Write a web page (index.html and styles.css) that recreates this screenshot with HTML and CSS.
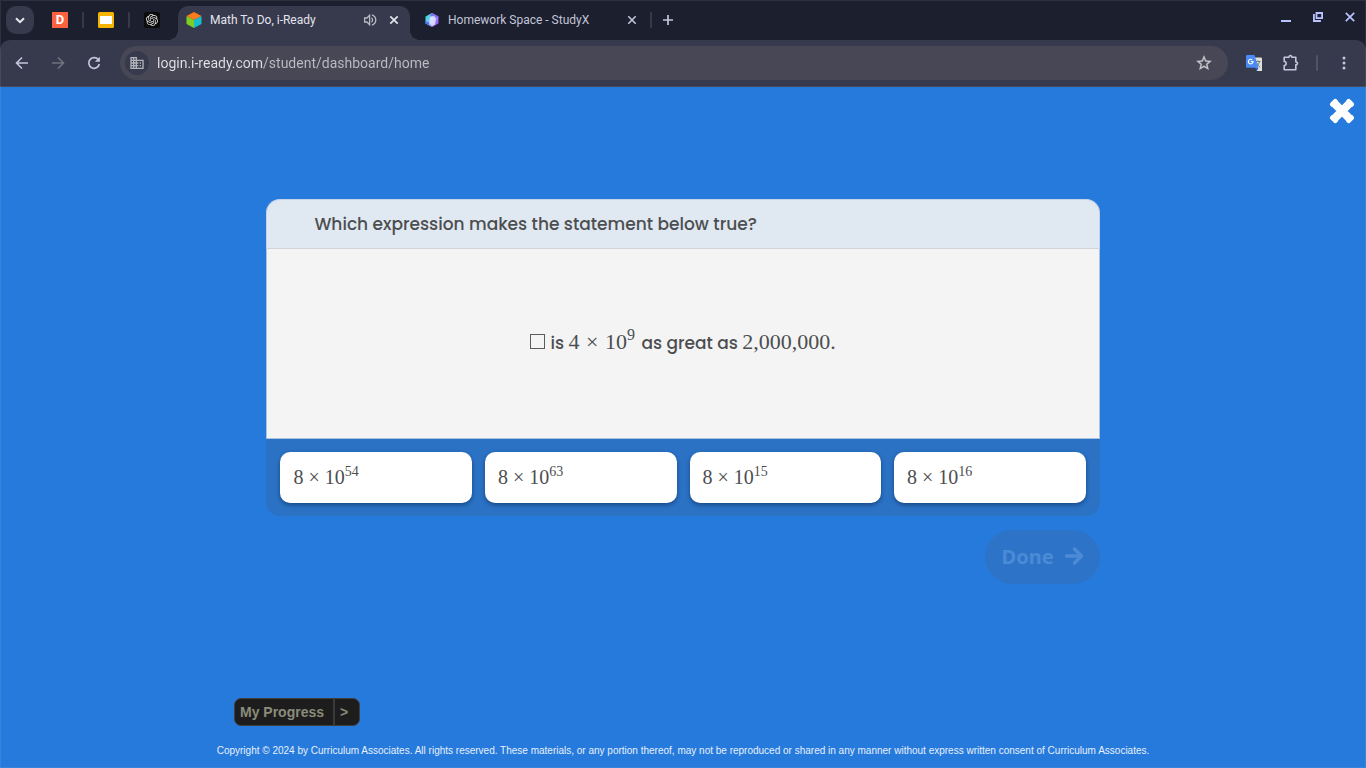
FILE: index.html
```html
<!DOCTYPE html>
<html lang="en">
<head>
<meta charset="utf-8">
<title>Math To Do, i-Ready</title>
<link rel="stylesheet" href="styles.css">
</head>
<body>
<header class="browser">
  <div class="tabstrip">
    <button class="tab-search" aria-label="Search tabs"><svg width="12" height="12" viewBox="0 0 12 12"><path d="M2 4.200 6 8.200l4-4" fill="none" stroke="currentColor" stroke-width="2"/></svg></button>
    <button class="pinned" aria-label="Pinned tab D"><span class="fav fav-d">D</span></button>
    <span class="sep"></span>
    <button class="pinned" aria-label="Slides"><svg width="16" height="16" viewBox="0 0 16 16"><rect width="16" height="16" rx="1.500" fill="#f5b400"/><rect x="2" y="4" width="12" height="8" fill="#fff"/></svg></button>
    <span class="sep"></span>
    <button class="pinned" aria-label="ChatGPT"><svg width="16" height="16" viewBox="0 0 32 32"><rect width="32" height="32" rx="5" fill="#0b0b0c"/><path transform="translate(4 4)" fill="#e6e6e6" d="M22.280 9.820a5.980 5.980 0 0 0-.52-4.910 6.050 6.050 0 0 0-6.510-2.900A6.070 6.070 0 0 0 4.980 4.180a5.980 5.980 0 0 0-4 2.900 6.050 6.050 0 0 0 .74 7.100 5.980 5.980 0 0 0 .51 4.910 6.050 6.050 0 0 0 6.520 2.900A5.980 5.980 0 0 0 13.260 24a6.060 6.060 0 0 0 5.770-4.210 5.990 5.990 0 0 0 4-2.900 6.060 6.060 0 0 0-.75-7.070zm-9.020 12.610a4.480 4.480 0 0 1-2.880-1.040l.14-.08 4.780-2.760a.79.79 0 0 0 .39-.68v-6.740l2.020 1.170a.07.07 0 0 1 .04.05v5.580a4.500 4.500 0 0 1-4.490 4.500zm-9.660-4.130a4.470 4.470 0 0 1-.54-3.010l.14.09 4.780 2.760a.77.77 0 0 0 .78 0l5.840-3.370v2.330a.08.08 0 0 1-.03.06L9.740 19.950a4.500 4.500 0 0 1-6.140-1.650zM2.340 7.900a4.490 4.490 0 0 1 2.370-1.970V11.600a.77.77 0 0 0 .39.68l5.810 3.350-2.020 1.170a.08.08 0 0 1-.07 0l-4.830-2.790A4.500 4.500 0 0 1 2.340 7.870zm16.600 3.860l-5.830-3.390L15.120 7.200a.08.08 0 0 1 .07 0l4.830 2.790a4.490 4.490 0 0 1-.68 8.100v-5.680a.79.79 0 0 0-.4-.65zm2.010-3.020l-.14-.09-4.770-2.780a.78.78 0 0 0-.79 0L9.410 9.230V6.900a.07.07 0 0 1 .03-.06l4.830-2.790a4.500 4.500 0 0 1 6.680 4.660zM8.310 12.860l-2.020-1.160a.08.08 0 0 1-.04-.06V6.070a4.500 4.500 0 0 1 7.380-3.450l-.14.08-4.780 2.760a.79.79 0 0 0-.39.68zm1.100-2.370l2.600-1.500 2.610 1.500v3l-2.600 1.500-2.610-1.500z"/></svg></button>
    <div class="tab tab-active">
      <svg width="16" height="16" viewBox="0 0 16 16"><path d="M8 0l7.500 4L8 8 .5 4z" fill="#ff7a1a"/><path d="M.5 4L8 8v8L.5 12z" fill="#7fce26"/><path d="M15.500 4L8 8v8l7.500-4z" fill="#19bccb"/></svg>
      <span class="tab-title">Math To Do, i-Ready</span>
      <button class="tab-btn" aria-label="Mute tab"><svg width="14" height="14" viewBox="0 0 14 14" fill="none" stroke="#b9bac6" stroke-width="1.300"><path d="M1.600 5v4h2.300l2.700 2.600V2.400L3.900 5z"/><path d="M8.500 4.800c1.400 1 1.400 3.400 0 4.400M9 1.800c5 1.900 5 8.500 0 10.400"/></svg></button>
      <button class="tab-btn" aria-label="Close tab"><svg width="10" height="10" viewBox="0 0 10 10"><path d="M1.300 1.300l7.400 7.400M8.700 1.300L1.300 8.700" stroke="#e4e4ee" stroke-width="1.700"/></svg></button>
    </div>
    <div class="tab">
      <svg width="16" height="16" viewBox="0 0 16 16"><defs><linearGradient id="gem" x1="0" y1=".2" x2="1" y2=".8"><stop offset="0" stop-color="#20e0d8"/><stop offset=".45" stop-color="#9db8ff"/><stop offset="1" stop-color="#9a4df0"/></linearGradient></defs><path d="M8 1l6.500 3.500v7L8 15l-6.500-3.500v-7z" fill="url(#gem)"/><path d="M8 1l6.500 3.500L11 6 6 4z" fill="#7a6cf0"/><path d="M6 5l4-1.500 2 3-1 6-3 1.500-2.500-3z" fill="#eef" opacity=".75"/><path d="M1.500 9l3.500 1.500v2.800l-3.500-1.800z" fill="#4a73f5"/></svg>
      <span class="tab-title">Homework Space - StudyX</span>
      <button class="tab-btn" aria-label="Close tab"><svg width="10" height="10" viewBox="0 0 10 10"><path d="M1.300 1.300l7.400 7.400M8.700 1.300L1.300 8.700" stroke="#c3c5d8" stroke-width="1.600"/></svg></button>
    </div>
    <span class="sep"></span>
    <button class="new-tab" aria-label="New tab"><svg width="12" height="12" viewBox="0 0 12 12"><path d="M6 1v10M1 6h10" stroke="#c3c5d8" stroke-width="1.700"/></svg></button>
    <div class="window-controls">
      <button aria-label="Minimize"><svg width="12" height="12" viewBox="0 0 12 12"><path d="M1 10h10" stroke="currentColor" stroke-width="2"/></svg></button>
      <button aria-label="Restore"><svg width="12" height="12" viewBox="0 0 12 12" fill="none" stroke="currentColor" stroke-width="1.800"><path d="M4.500 2h5.600v5.200H4.500zM1.900 3v7h7"/></svg></button>
      <button aria-label="Close window"><svg width="12" height="12" viewBox="0 0 12 12"><path d="M1.800 1.800l8.400 8.400M10.200 1.800l-8.400 8.400" stroke="currentColor" stroke-width="1.700"/></svg></button>
    </div>
  </div>
  <div class="toolbar">
    <button class="tool" aria-label="Back"><svg width="16" height="16" viewBox="0 0 16 16" fill="none" stroke="#c4c5db" stroke-width="1.600"><path d="M14 8H3M8 2.500L2.500 8 8 13.500"/></svg></button>
    <button class="tool" aria-label="Forward" disabled><svg width="16" height="16" viewBox="0 0 16 16" fill="none" stroke="#70727f" stroke-width="1.600"><path d="M2 8h11M8 2.500L13.500 8 8 13.500"/></svg></button>
    <button class="tool" aria-label="Reload"><svg width="16" height="16" viewBox="0 0 16 16"><path d="M12.600 5.200A5.300 5.300 0 1 0 13.300 9" fill="none" stroke="#c4c5db" stroke-width="1.700"/><path d="M13.900 1.800v5H8.900z" fill="#c4c5db"/></svg></button>
    <div class="omnibox">
      <button class="site-info" aria-label="Site information"><svg width="16" height="16" viewBox="0 0 24 24" fill="#b3b3ba"><path d="M12 7V3H2v18h20V7H12zM6 19H4v-2h2v2zm0-4H4v-2h2v2zm0-4H4V9h2v2zm0-4H4V5h2v2zm4 12H8v-2h2v2zm0-4H8v-2h2v2zm0-4H8V9h2v2zm0-4H8V5h2v2zm10 12h-8v-2h2v-2h-2v-2h2v-2h-2V9h8v10zm-2-8h-2v2h2v-2zm0 4h-2v2h2v-2z"/></svg></button>
      <input class="url" type="text" aria-label="Address" value="login.i-ready.com/student/dashboard/home">
      <button class="star" aria-label="Bookmark this tab"><svg width="18" height="18" viewBox="0 0 24 24" fill="#c8c8ce" stroke="#c8c8ce" stroke-width=".4"><path d="M22 9.240l-7.190-.62L12 2 9.190 8.630 2 9.240l5.460 4.730L5.820 21 12 17.270 18.180 21l-1.630-7.030L22 9.240zM12 15.400l-3.760 2.270 1-4.280-3.320-2.880 4.380-.38L12 6.100l1.710 4.040 4.380.38-3.320 2.880 1 4.280L12 15.400z"/></svg></button>
    </div>
    <button class="tool" aria-label="Google Translate"><svg width="16" height="16" viewBox="0 0 16 16"><path d="M6 2.500h9a1 1 0 0 1 1 1V16h-5z" fill="#dfe0da"/><path d="M9.500 6.500h5M12 5.500v1M13.500 6.500c-.5 2.500-2 4-3 5M10.800 8c.8 1.800 2 3 3.400 4" fill="none" stroke="#66757a" stroke-width=".9"/><path d="M1 0h7.500l4 12.800H1a1 1 0 0 1-1-1V1a1 1 0 0 1 1-1z" fill="#4a8af4"/><path d="M8.500 12.800h4L10.800 16z" fill="#2a56c6"/><path d="M6.300 4.900A2.300 2.300 0 1 0 7 6.500H4.800" fill="none" stroke="#fff" stroke-width="1.200"/></svg></button>
    <button class="tool" aria-label="Extensions"><svg width="18" height="18" viewBox="0 0 18 18"><path d="M3.200 3.300h4.800c-.2-2.200 3-2.200 2.800 0h4v4.600c2.200-.1 2.200 3 0 2.900v4.900H3.200v-4.100c2.600-.2 2.600-3.900 0-4.100z" fill="none" stroke="#c4c5db" stroke-width="1.600" stroke-linejoin="round"/></svg></button>
    <span class="sep"></span>
    <button class="tool" aria-label="Menu"><svg width="16" height="16" viewBox="0 0 16 16" fill="#c4c5db"><circle cx="8" cy="3" r="1.500"/><circle cx="8" cy="8" r="1.500"/><circle cx="8" cy="13" r="1.500"/></svg></button>
  </div>
</header>
<main class="page">
  <button class="page-close" aria-label="Close lesson"><svg width="26" height="26" viewBox="0 0 26 26"><path d="M4.900 4.900l16.200 16.200M21.100 4.900L4.900 21.100" stroke="#fff" stroke-width="8"/><path d="M3.500 6.300l2.800-2.800M19.700 3.500l2.800 2.800M22.500 19.700l-2.800 2.800M6.300 22.500l-2.800-2.800" stroke="#fff" stroke-width="5" stroke-linecap="round"/></svg></button>
  <section class="question">
    <h1 class="question-head">Which expression makes the statement below true?</h1>
    <div class="question-body">
      <p class="statement"><span class="blank"></span> is <span class="math">4 <span class="times">×</span> 10<sup>9</sup></span> as great as <span class="math">2,000,000.</span></p>
    </div>
    <div class="answers">
      <button class="answer math">8 <span class="times">×</span> 10<sup>54</sup></button>
      <button class="answer math">8 <span class="times">×</span> 10<sup>63</sup></button>
      <button class="answer math">8 <span class="times">×</span> 10<sup>15</sup></button>
      <button class="answer math">8 <span class="times">×</span> 10<sup>16</sup></button>
    </div>
    <button class="done" disabled>Done <svg width="20" height="20" viewBox="0 0 20 20" fill="none" stroke="currentColor" stroke-width="3.400" stroke-linecap="round" stroke-linejoin="round"><path d="M2.500 10h14M10.500 3l7 7-7 7"/></svg></button>
  </section>
  <footer class="footer">
    <button class="progress"><span class="progress-label">My Progress</span><span class="progress-arrow">&gt;</span></button>
    <p class="copyright">Copyright © 2024 by Curriculum Associates. All rights reserved. These materials, or any portion thereof, may not be reproduced or shared in any manner without express written consent of Curriculum Associates.</p>
  </footer>
</main>
</body>
</html>
```
FILE: styles.css
```css
* { box-sizing: border-box; }

body {
  margin: 0;
  min-height: 100vh;
  display: flex;
  flex-direction: column;
  position: relative;
  background: #267adb;
  font-family: Roboto, sans-serif;
}

body::after {
  content: "";
  position: absolute;
  inset: 0;
  border: 1px solid rgba(255, 255, 255, 0.08);
  pointer-events: none;
}

button {
  margin: 0;
  padding: 0;
  border: 0;
  background: none;
  color: inherit;
  font: inherit;
  display: flex;
  align-items: center;
  justify-content: center;
}

svg { display: block; flex: none; }

.browser { background: #1c1f2e; }

.tabstrip {
  height: 40px;
  padding: 0 0 0 6px;
  display: flex;
  align-items: center;
}

.tab-search {
  width: 28px;
  height: 28px;
  margin-right: 4px;
  border-radius: 10px;
  background: #363a4c;
  color: #e8e8f2;
}

.pinned { width: 44px; height: 28px; }

.fav-d {
  width: 16px;
  height: 16px;
  background: #fb6340;
  color: #fff;
  font-size: 13px;
  font-weight: 700;
  line-height: 16px;
}

.sep {
  width: 2px;
  height: 16px;
  border-radius: 1px;
  background: #363949;
}

.tab {
  width: 240px;
  height: 34px;
  padding: 0 10px 0 14px;
  display: flex;
  align-items: center;
  gap: 8px;
  color: #c3c5d8;
  font-size: 12px;
}

.tab-title { flex: 1; white-space: nowrap; }

.tab-active {
  width: 232px;
  margin-left: 4px;
  padding: 0 8px;
  align-self: flex-end;
  padding-bottom: 6px;
  border-radius: 10px 10px 0 0;
  background: #363a4c;
  color: #e4e4ee;
  position: relative;
}

.tab-active::before,
.tab-active::after {
  content: "";
  position: absolute;
  bottom: 0;
  width: 10px;
  height: 10px;
}

.tab-active::before {
  left: -10px;
  background: radial-gradient(circle at 0 0, transparent 10px, #363a4c 10px);
}

.tab-active::after {
  right: -10px;
  background: radial-gradient(circle at 100% 0, transparent 10px, #363a4c 10px);
}

.tab-btn { width: 16px; height: 16px; }

.new-tab { width: 32px; height: 28px; }

.window-controls {
  margin-left: auto;
  padding-bottom: 6px;
  display: flex;
  color: #b9c3ff;
}

.window-controls button { width: 32px; height: 28px; }

.toolbar {
  height: 47px;
  padding: 0 4px;
  display: flex;
  align-items: center;
  border-bottom: 1px solid #474a58;
  border-radius: 10px 10px 0 0;
  background: #363a4c;
}

.tool { width: 36px; height: 34px; }

.toolbar .sep { margin: 0 8px; background: #51535f; }

.omnibox {
  flex: 1;
  height: 34px;
  margin: 0 8px;
  padding: 0 12px 0 5px;
  display: flex;
  align-items: center;
  gap: 8px;
  border-radius: 17px;
  background: #474755;
}

.site-info {
  width: 24px;
  height: 24px;
  border-radius: 12px;
  background: #363a4c;
}

/* The host is brighter than the path that follows it. */
.url {
  flex: 1;
  min-width: 0;
  padding: 0;
  border: 0;
  outline: 0;
  font-family: Roboto, sans-serif;
  font-size: 14px;
  line-height: 20px;
  color: transparent;
  background: linear-gradient(90deg, #e3e2ea 107px, #bebdc6 107px);
  -webkit-background-clip: text;
  background-clip: text;
}

.star { width: 24px; height: 24px; }

.page {
  flex: 1;
  position: relative;
  padding-top: 112px;
  display: flex;
  flex-direction: column;
  align-items: center;
  background: #267adb;
}

.page-close {
  position: absolute;
  top: 11px;
  right: 11px;
}

.question {
  width: 61%;
  display: flex;
  flex-direction: column;
}

.question-head {
  margin: 0;
  min-height: 50px;
  padding: 12px 47px;
  border: 1px solid #c3d3e8;
  border-bottom-color: #cfd3d8;
  border-radius: 14px 14px 0 0;
  background: #e0e8f1;
  color: #4c4e50;
  font-family: Poppins, "Noto Sans", sans-serif;
  font-size: 17px;
  font-weight: 500;
  line-height: 24px;
}

.question-body {
  min-height: 190px;
  display: flex;
  align-items: center;
  justify-content: center;
  border: 1px solid #a9c3e2;
  border-top: 0;
  background: #f4f4f4;
}

.statement {
  margin: 0;
  padding-bottom: 2px;
  color: #4c4e50;
  font-family: Poppins, "Noto Sans", sans-serif;
  font-size: 17px;
  font-weight: 500;
  line-height: 28px;
}

.blank {
  display: inline-block;
  width: 15px;
  height: 15px;
  margin-right: 1px;
  border: 1px solid #5a5b5c;
}

.math {
  font-family: KaTeX_Main, "Liberation Serif", serif;
  font-size: 22px;
  font-weight: 400;
  color: #4c4e50;
}

.times { margin: 0 1px; }

.math sup {
  margin-right: 2px;
  font-size: 16px;
  line-height: 0;
  vertical-align: 9px;
}

.answers {
  padding: 13px 14px;
  display: grid;
  grid-template-columns: repeat(4, 1fr);
  gap: 13px;
  border-radius: 0 0 14px 14px;
  background: #2b72c4;
}

.answer {
  min-height: 51px;
  padding: 0 13px;
  display: block;
  text-align: left;
  border-radius: 10px;
  background: #fff;
  box-shadow: 0 2px 4px rgba(0, 20, 60, 0.45);
  font-size: 20px;
}

.answer .times { margin: 0; }

.answer sup {
  font-size: 14px;
  vertical-align: 8px;
}

.done {
  align-self: flex-end;
  height: 54px;
  margin-top: 14px;
  padding: 0 16px 2px 17px;
  gap: 10px;
  border-radius: 27px;
  background: #2d74c9;
  color: #4b8bd6;
  font-family: "Noto Sans", sans-serif;
  font-size: 20px;
  font-weight: 700;
}

.footer {
  width: 100%;
  margin-top: auto;
  padding-bottom: 10px;
  font-family: "Liberation Sans", Arial, sans-serif;
}

.progress {
  height: 28px;
  margin-left: 234px;
  border: 1px solid #403f3f;
  border-radius: 7px;
  background: #1d1d1d;
  color: #8c8c7c;
  font-size: 14px;
  font-weight: 700;
}

.progress-label {
  padding: 0 9px 0 5px;
  line-height: 26px;
  border-right: 2px solid #3a3a3a;
}

.progress-arrow { padding: 0 11px 0 5px; }

.copyright {
  margin: 17px 0 0;
  text-align: center;
  color: #e6f0fb;
  font-size: 10px;
  line-height: 15px;
}
```
